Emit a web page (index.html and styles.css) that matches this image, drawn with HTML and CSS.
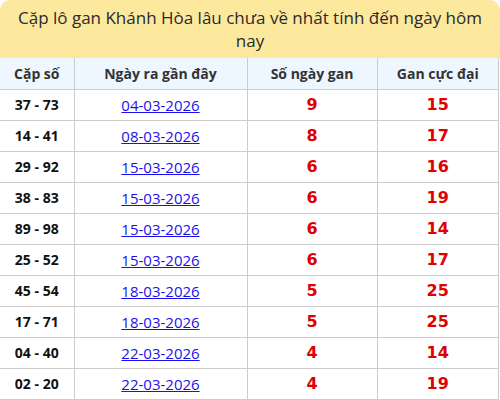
FILE: index.html
```html
<!DOCTYPE html>
<html lang="vi">
<head>
<meta charset="utf-8">
<link rel="stylesheet" href="styles.css">
</head>
<body>
<div class="wrap">
  <div class="title">Cặp lô gan Khánh Hòa lâu chưa về nhất tính đến ngày hôm nay</div>
  <table class="gan">
    <thead>
      <tr><th class="c1">Cặp số</th><th class="c2">Ngày ra gần đây</th><th class="c3">Số ngày gan</th><th class="c4">Gan cực đại</th></tr>
    </thead>
    <tbody>
      <tr><td class="pair">37 - 73</td><td><a href="#">04-03-2026</a></td><td class="num">9</td><td class="num">15</td></tr>
      <tr><td class="pair">14 - 41</td><td><a href="#">08-03-2026</a></td><td class="num">8</td><td class="num">17</td></tr>
      <tr><td class="pair">29 - 92</td><td><a href="#">15-03-2026</a></td><td class="num">6</td><td class="num">16</td></tr>
      <tr><td class="pair">38 - 83</td><td><a href="#">15-03-2026</a></td><td class="num">6</td><td class="num">19</td></tr>
      <tr><td class="pair">89 - 98</td><td><a href="#">15-03-2026</a></td><td class="num">6</td><td class="num">14</td></tr>
      <tr><td class="pair">25 - 52</td><td><a href="#">15-03-2026</a></td><td class="num">6</td><td class="num">17</td></tr>
      <tr><td class="pair">45 - 54</td><td><a href="#">18-03-2026</a></td><td class="num">5</td><td class="num">25</td></tr>
      <tr><td class="pair">17 - 71</td><td><a href="#">18-03-2026</a></td><td class="num">5</td><td class="num">25</td></tr>
      <tr><td class="pair">04 - 40</td><td><a href="#">22-03-2026</a></td><td class="num">4</td><td class="num">14</td></tr>
      <tr><td class="pair">02 - 20</td><td><a href="#">22-03-2026</a></td><td class="num">4</td><td class="num">19</td></tr>
    </tbody>
  </table>
</div>
</body>
</html>
```
FILE: styles.css
```css
html, body {
  margin: 0;
  padding: 0;
  background: #fff;
}
body {
  font-family: "Open Sans", "Noto Sans", sans-serif;
  color: #333;
}
.wrap {
  width: 500px;
}
.title {
  box-sizing: border-box;
  height: 58px;
  background: #fde99e;
  border-radius: 10px 10px 0 0;
  padding: 6px 8px 0;
  text-align: center;
  font-size: 17px;
  line-height: 23px;
  font-weight: 500;
  color: #2a2a2a;
}
.gan {
  width: 499px;
  border-collapse: collapse;
  table-layout: fixed;
}
.gan th, .gan td {
  border: 1px solid #cccccc;
  text-align: center;
  padding: 0;
  height: 31px;
  box-sizing: border-box;
}
.gan tr > :first-child { border-left: none; }
.gan th {
  background: #eef6ff;
  font-size: 14px;
  font-weight: 700;
  color: #333;
  border-top: none;
}
.c1 { width: 74px; }
.c2 { width: 173px; }
.c3 { width: 130px; }
.pair {
  font-size: 14px;
  font-weight: 700;
  color: #111;
}
.gan a {
  color: #1a10ee;
  font-size: 15px;
  text-decoration: underline;
}
.num {
  font-family: "DejaVu Sans", sans-serif;
  font-size: 16px;
  font-weight: 700;
  color: #e00000;
}
```
